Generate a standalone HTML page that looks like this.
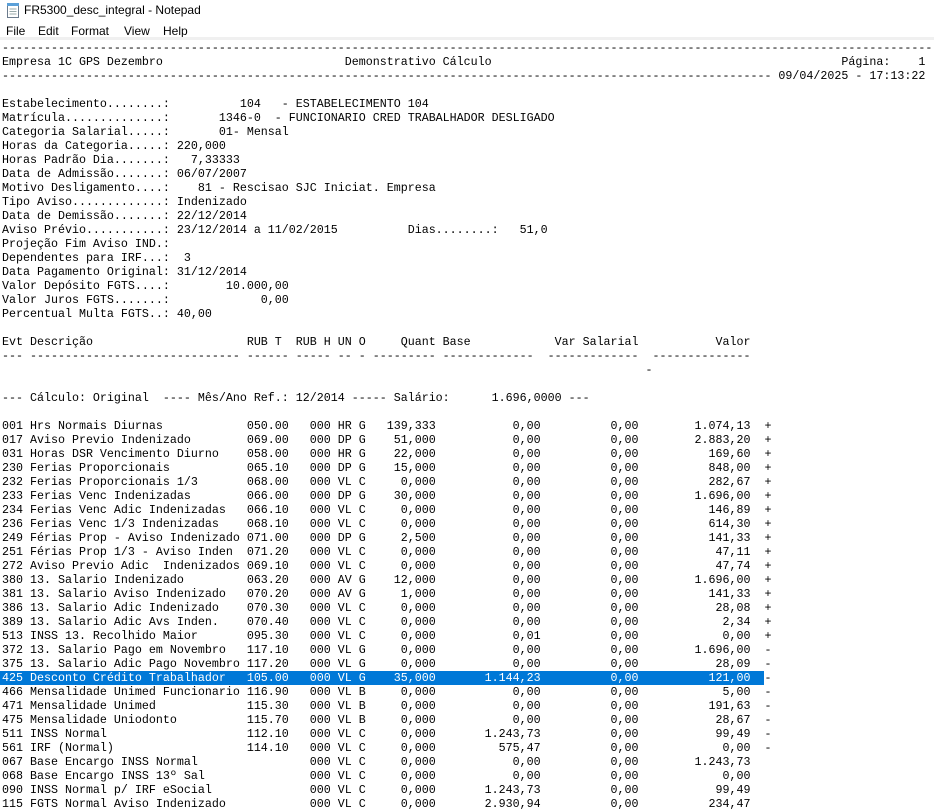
<!DOCTYPE html>
<html><head><meta charset="utf-8">
<style>
html,body{margin:0;padding:0;background:#fff;width:934px;height:810px;overflow:hidden}
.title{position:absolute;left:24px;top:1px;font:12px "Liberation Sans",sans-serif;color:#000;line-height:18px}
.icon{position:absolute;left:6px;top:3px}
.menu{position:absolute;top:22px;left:0;font:12px "Liberation Sans",sans-serif;color:#000;line-height:18px}
.menu span{position:absolute;white-space:nowrap}
.sep{position:absolute;left:0;top:37px;width:934px;height:3px;background:#f0f0f0}
pre{position:absolute;left:2px;top:41px;margin:0;font-family:"Liberation Mono",monospace;font-size:11.6667px;line-height:14px;color:#000;white-space:pre}
.sel{background:#0078d7;color:#fff;display:inline-block;margin-left:-2px;padding-left:2px}
</style></head><body>
<svg class="icon" width="15" height="15" viewBox="0 0 15 15"><rect x="1.5" y="1.5" width="11" height="13" fill="#fff" stroke="#6b7b8c"/><rect x="1" y="0" width="12" height="3" fill="#5ba0d8"/><line x1="3.5" y1="6" x2="10.5" y2="6" stroke="#9aa" /><line x1="3.5" y1="8.5" x2="10.5" y2="8.5" stroke="#9aa"/><line x1="3.5" y1="11" x2="10.5" y2="11" stroke="#9aa"/></svg>
<div class="title">FR5300_desc_integral - Notepad</div>
<div class="menu"><span style="left:6px">File</span><span style="left:38px">Edit</span><span style="left:71px">Format</span><span style="left:124px">View</span><span style="left:163px">Help</span></div>
<div class="sep"></div>
<pre>-------------------------------------------------------------------------------------------------------------------------------------
Empresa 1C GPS Dezembro                          Demonstrativo Cálculo                                                  Página:    1
-------------------------------------------------------------------------------------------------------------- 09/04/2025 - 17:13:22

Estabelecimento........:          104   - ESTABELECIMENTO 104
Matrícula..............:       1346-0  - FUNCIONARIO CRED TRABALHADOR DESLIGADO
Categoria Salarial.....:       01- Mensal
Horas da Categoria.....: 220,000
Horas Padrão Dia.......:   7,33333
Data de Admissão.......: 06/07/2007
Motivo Desligamento....:    81 - Rescisao SJC Iniciat. Empresa
Tipo Aviso.............: Indenizado
Data de Demissão.......: 22/12/2014
Aviso Prévio...........: 23/12/2014 a 11/02/2015          Dias........:   51,0
Projeção Fim Aviso IND.:
Dependentes para IRF...:  3
Data Pagamento Original: 31/12/2014
Valor Depósito FGTS....:        10.000,00
Valor Juros FGTS.......:             0,00
Percentual Multa FGTS..: 40,00

Evt Descrição                      RUB T  RUB H UN O     Quant Base            Var Salarial           Valor
--- ------------------------------ ------ ----- -- - --------- -------------  -------------  --------------
                                                                                            -

--- Cálculo: Original  ---- Mês/Ano Ref.: 12/2014 ----- Salário:      1.696,0000 ---

001 Hrs Normais Diurnas            050.00   000 HR G   139,333           0,00          0,00        1.074,13  +
017 Aviso Previo Indenizado        069.00   000 DP G    51,000           0,00          0,00        2.883,20  +
031 Horas DSR Vencimento Diurno    058.00   000 HR G    22,000           0,00          0,00          169,60  +
230 Ferias Proporcionais           065.10   000 DP G    15,000           0,00          0,00          848,00  +
232 Ferias Proporcionais 1/3       068.00   000 VL C     0,000           0,00          0,00          282,67  +
233 Ferias Venc Indenizadas        066.00   000 DP G    30,000           0,00          0,00        1.696,00  +
234 Ferias Venc Adic Indenizadas   066.10   000 VL C     0,000           0,00          0,00          146,89  +
236 Ferias Venc 1/3 Indenizadas    068.10   000 VL C     0,000           0,00          0,00          614,30  +
249 Férias Prop - Aviso Indenizado 071.00   000 DP G     2,500           0,00          0,00          141,33  +
251 Férias Prop 1/3 - Aviso Inden  071.20   000 VL C     0,000           0,00          0,00           47,11  +
272 Aviso Previo Adic  Indenizados 069.10   000 VL C     0,000           0,00          0,00           47,74  +
380 13. Salario Indenizado         063.20   000 AV G    12,000           0,00          0,00        1.696,00  +
381 13. Salario Aviso Indenizado   070.20   000 AV G     1,000           0,00          0,00          141,33  +
386 13. Salario Adic Indenizado    070.30   000 VL C     0,000           0,00          0,00           28,08  +
389 13. Salario Adic Avs Inden.    070.40   000 VL C     0,000           0,00          0,00            2,34  +
513 INSS 13. Recolhido Maior       095.30   000 VL C     0,000           0,01          0,00            0,00  +
372 13. Salario Pago em Novembro   117.10   000 VL G     0,000           0,00          0,00        1.696,00  -
375 13. Salario Adic Pago Novembro 117.20   000 VL G     0,000           0,00          0,00           28,09  -
<span class="sel">425 Desconto Crédito Trabalhador   105.00   000 VL G    35,000       1.144,23          0,00          121,00  </span>-
466 Mensalidade Unimed Funcionario 116.90   000 VL B     0,000           0,00          0,00            5,00  -
471 Mensalidade Unimed             115.30   000 VL B     0,000           0,00          0,00          191,63  -
475 Mensalidade Uniodonto          115.70   000 VL B     0,000           0,00          0,00           28,67  -
511 INSS Normal                    112.10   000 VL C     0,000       1.243,73          0,00           99,49  -
561 IRF (Normal)                   114.10   000 VL C     0,000         575,47          0,00            0,00  -
067 Base Encargo INSS Normal                000 VL C     0,000           0,00          0,00        1.243,73
068 Base Encargo INSS 13º Sal               000 VL C     0,000           0,00          0,00            0,00
090 INSS Normal p/ IRF eSocial              000 VL C     0,000       1.243,73          0,00           99,49
115 FGTS Normal Aviso Indenizado            000 VL C     0,000       2.930,94          0,00          234,47
</pre>
</body></html>
